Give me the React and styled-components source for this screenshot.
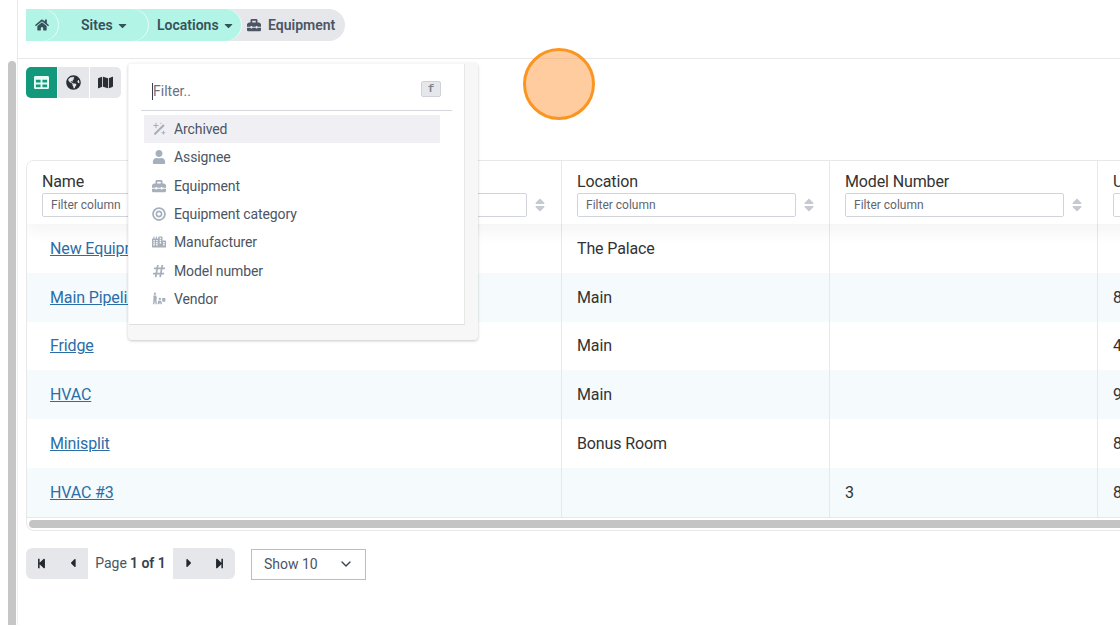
import React from "react";
import styled, { createGlobalStyle } from "styled-components";
import {
  FaHome,
  FaToolbox,
  FaCaretDown,
  FaCaretLeft,
  FaCaretRight,
  FaTable,
  FaGlobeAmericas,
  FaMap,
  FaUser,
  FaBullseye,
  FaCity,
  FaHashtag,
  FaStepBackward,
  FaStepForward,
  FaSort,
} from "react-icons/fa";
import { ChevronDown } from "lucide-react";

const GlobalStyle = createGlobalStyle`
    html, body {
        margin: 0;
        padding: 0;
        background: #ffffff;
        overflow: hidden;
    }
    * {
        box-sizing: border-box;
    }
`;

const Shell = styled.div`
    width: 1120px;
    height: 625px;
    position: relative;
    overflow: hidden;
    display: grid;
    grid-template-columns: 18px 1fr;
    grid-template-rows: 59px 1fr;
    font-family: "Roboto", "Noto Sans", sans-serif;
    color: #374151;
`;
const Corner = styled.div`
    border-right: 1px solid #e8e8e8;
`;
const TopBar = styled.div`
    padding: 9px 0 0 8px;
    border-bottom: 1px solid #e8e8e8;
`;
const Rail = styled.div`
    padding: 2px 1px 0 8px;
    border-right: 1px solid #eeeeee;
`;
const RailThumb = styled.div`
    height: 100%;
    background: #c6c6c6;
    border-radius: 4px 4px 0 0;
`;
const Content = styled.main`
    min-width: 0;
    padding: 8px 0 0 8px;
    overflow: hidden;
`;

const Crumbs = styled.nav`
    display: flex;
    height: 32px;
    font-size: 14px;
    font-weight: 600;
`;
const Crumb = styled.div`
    height: 32px;
    display: flex;
    align-items: center;
    justify-content: ${(p) => (p.$center ? "center" : "flex-start")};
    gap: ${(p) => p.$gap || 3}px;
    width: ${(p) => p.$width}px;
    margin-left: ${(p) => p.$overlap || 0}px;
    padding-left: ${(p) => p.$pad || 0}px;
    position: relative;
    z-index: ${(p) => p.$layer};
    color: ${(p) => (p.$current ? "#4b5563" : "#37525a")};
    background: ${(p) => (p.$current ? "#e5e7eb" : "#b2f5e6")};
    border-radius: 0 16px 16px 0;
    box-shadow: ${(p) => (p.$current ? "none" : "1px 0 0 #e6fbf6")};
    svg {
        flex: none;
    }
`;

const ViewToggle = styled.div`
    display: flex;
    gap: 1px;
    width: 95px;
    height: 31px;
`;
const ViewButton = styled.button`
    flex: 1;
    border: none;
    padding: 0;
    display: flex;
    align-items: center;
    justify-content: center;
    font-size: 15px;
    color: ${(p) => (p.$active ? "#e9fbf6" : "#2b2f36")};
    background: ${(p) => (p.$active ? "#12997b" : "#e5e7eb")};
    &:first-child {
        border-radius: 5px 0 0 5px;
    }
    &:last-child {
        border-radius: 0 5px 5px 0;
    }
`;

const Card = styled.section`
    width: 1200px;
    margin-top: 62px;
    border: 1px solid #e8e8e8;
    border-radius: 8px 0 0 8px;
    background: #ffffff;
    overflow: hidden;
`;
const Grid = styled.div`
    display: grid;
    grid-template-columns: 267px 268px 268px 268px 128px;
    letter-spacing: -0.13px;
`;
const HeadRow = styled(Grid)`
    height: 63px;
    position: relative;
    z-index: 1;
    background: #ffffff;
    box-shadow: 0 8px 14px rgba(0, 0, 0, 0.045);
`;
const HeadCell = styled.div`
    padding: 11px 15px 0;
    border-right: ${(p) => (p.$open ? "none" : "1px solid #e8e8e8")};
    &:last-child {
        border-right: none;
    }
`;
const HeadTitle = styled.div`
    height: 20px;
    font-size: 16px;
    line-height: 20px;
    color: #333333;
    white-space: nowrap;
`;
const FilterLine = styled.div`
    display: flex;
    align-items: center;
    gap: 7px;
    margin-top: 1px;
`;
const FilterInput = styled.input`
    width: ${(p) => (p.$narrow ? 218 : 219)}px;
    height: 24px;
    flex: none;
    padding: 0 8px;
    border: 1px solid #d1d5db;
    border-radius: 2px;
    outline: none;
    font-family: inherit;
    font-size: 12px;
    background: #ffffff;
    &::placeholder {
        color: #5f6670;
        opacity: 1;
    }
`;
const SortIcon = styled(FaSort)`
    width: 12px;
    height: 16px;
    color: #c4c9d2;
    flex: none;
`;
const BodyRow = styled(Grid)`
    height: 48.8px;
    background: ${(p) => (p.$striped ? "#f5fafd" : "#ffffff")};
`;
const Cell = styled.div`
    display: flex;
    align-items: center;
    padding-left: ${(p) => (p.$name ? 23 : 15)}px;
    border-right: ${(p) => (p.$open ? "none" : "1px solid #e8e8e8")};
    font-size: 16px;
    color: #333333;
    white-space: nowrap;
    &:last-child {
        border-right: none;
    }
`;
const NameLink = styled.a`
    color: #2a6ea8;
    text-decoration: underline;
`;
const ScrollTrack = styled.div`
    height: 13px;
    padding: 2px 0 3px 2px;
    border-top: 1px solid #e8e8e8;
`;
const ScrollThumb = styled.div`
    height: 8px;
    background: #c4c4c4;
    border-radius: 4px;
`;

const Pager = styled.div`
    display: flex;
    align-items: flex-start;
    margin-top: 17px;
`;
const PagerGroup = styled.div`
    display: flex;
    width: 62px;
    height: 31px;
    background: #e5e7eb;
    border-radius: ${(p) => (p.$end ? "0 6px 6px 0" : "6px 0 0 6px")};
`;
const PagerButton = styled.button`
    flex: 1;
    border: none;
    padding: 0;
    background: none;
    display: flex;
    align-items: center;
    justify-content: center;
    font-size: 11px;
    color: #23272e;
`;
const PageLabel = styled.div`
    width: 85px;
    height: 31px;
    display: flex;
    align-items: center;
    justify-content: center;
    gap: 3px;
    font-size: 14px;
    color: #4b5563;
    b {
        font-weight: 600;
        color: #374151;
    }
`;
const ShowSelect = styled.div`
    width: 115px;
    height: 31px;
    margin: 1px 0 0 16px;
    padding: 0 11px 0 12px;
    display: flex;
    align-items: center;
    justify-content: space-between;
    border: 1px solid #bdbdbd;
    font-size: 14px;
    color: #4b5563;
`;

const Popup = styled.div`
    position: absolute;
    left: 128px;
    top: 63px;
    width: 350px;
    height: 277px;
    padding: 1px 13px 15px 1px;
    z-index: 5;
    background: #f7f7f7;
    border-radius: 4px;
    box-shadow: 0 1px 3px rgba(0, 0, 0, 0.22);
`;
const Panel = styled.div`
    height: 100%;
    padding: 0 12px;
    background: #ffffff;
    border-right: 1px solid #e8e8e8;
    border-bottom: 1px solid #e0e0e0;
`;
const SearchRow = styled.div`
    height: 47px;
    width: 311px;
    padding: 9px 11px 0 11px;
    display: flex;
    align-items: center;
    justify-content: space-between;
    border-bottom: 1px solid #d5d7da;
`;
const SearchText = styled.div`
    padding-left: 0;
    border-left: 1px solid #374151;
    line-height: 17px;
    font-size: 14px;
    color: #6b7280;
`;
const Kbd = styled.kbd`
    width: 20px;
    height: 16px;
    margin-top: -5px;
    display: flex;
    align-items: center;
    justify-content: center;
    background: #e5e7eb;
    border: 1px solid #cfd3d9;
    border-radius: 2px;
    font-family: "Liberation Mono", monospace;
    font-size: 11px;
    font-weight: 700;
    color: #7b8290;
`;
const MenuList = styled.ul`
    list-style: none;
    margin: 4px 0 0 3px;
    padding: 0;
    width: 296px;
`;
const MenuItem = styled.li`
    height: 28.3px;
    display: flex;
    align-items: center;
    gap: 8px;
    padding-left: 8px;
    font-size: 14px;
    letter-spacing: -0.1px;
    color: #4b5563;
    background: ${(p) => (p.$active ? "#f0f0f4" : "transparent")};
    svg {
        width: 14px;
        height: 14px;
        flex: none;
        color: #a6afbc;
    }
`;

const Spotlight = styled.div`
    position: absolute;
    left: 523px;
    top: 48px;
    width: 72px;
    height: 72px;
    z-index: 6;
    border: 3px solid #fb9522;
    border-radius: 50%;
    background: rgba(255, 147, 51, 0.47);
`;

function WandIcon() {
  return (
    <svg viewBox="0 0 16 16" fill="none" stroke="currentColor" strokeLinecap="round">
      <path d="M3.5 13.5 13 4" strokeWidth="2.4" />
      <path d="M4.5 1.5v5M2 4h5" strokeWidth="1.2" />
      <path d="M13 10.5v3.5M11.2 12.2h3.6" strokeWidth="1.1" />
      <path d="M10 1.5h.5" strokeWidth="1.2" />
    </svg>
  );
}

function VendorIcon() {
  return (
    <svg viewBox="0 0 16 16" fill="currentColor">
      <circle cx="3.4" cy="2" r="1.3" />
      <path d="M1.6 4h3.2l.9 3.6H5l.6 6.4H4.1l-.7-4.6-.8 4.6H1.1l.6-6.4z" />
      <circle cx="9" cy="8" r="1.3" />
      <path d="M7 10h3.4l1.2 4H10l-.8-2-1 2H6.4z" />
      <path d="M11.4 6.8h3.8v4.4h-3.2z" />
    </svg>
  );
}

const rows = [
  { name: "New Equipment", location: "The Palace" },
  { name: "Main Pipeline", location: "Main", unit: "8" },
  { name: "Fridge", location: "Main", unit: "4" },
  { name: "HVAC", location: "Main", unit: "9" },
  { name: "Minisplit", location: "Bonus Room", unit: "8" },
  { name: "HVAC #3", model: "3", unit: "8" },
];

const columns = ["Name", "", "Location", "Model Number", "U"];

const menu = [
  { label: "Archived", Icon: WandIcon },
  { label: "Assignee", Icon: FaUser },
  { label: "Equipment", Icon: FaToolbox },
  { label: "Equipment category", Icon: FaBullseye },
  { label: "Manufacturer", Icon: FaCity },
  { label: "Model number", Icon: FaHashtag },
  { label: "Vendor", Icon: VendorIcon },
];

export default function App() {
  return (
    <Shell>
      <GlobalStyle />
      <Corner />
      <TopBar>
        <Crumbs>
          <Crumb $width={32} $layer={3} $center>
            <FaHome size={14} />
          </Crumb>
          <Crumb $width={106} $overlap={-16} $pad={39} $layer={2}>
            Sites <FaCaretDown size={13} />
          </Crumb>
          <Crumb $width={109} $overlap={-16} $pad={25} $layer={1}>
            Locations <FaCaretDown size={13} />
          </Crumb>
          <Crumb $width={120} $overlap={-16} $pad={22} $gap={7} $layer={0} $current>
            <FaToolbox size={14} /> Equipment
          </Crumb>
        </Crumbs>
      </TopBar>
      <Rail>
        <RailThumb />
      </Rail>
      <Content>
        <ViewToggle>
          <ViewButton $active>
            <FaTable />
          </ViewButton>
          <ViewButton>
            <FaGlobeAmericas />
          </ViewButton>
          <ViewButton>
            <FaMap />
          </ViewButton>
        </ViewToggle>

        <Card>
          <HeadRow>
            {columns.map((title, i) => (
              <HeadCell key={i} $open={i === 0}>
                <HeadTitle>{title}</HeadTitle>
                <FilterLine>
                  <FilterInput placeholder="Filter column" readOnly $narrow={i === 1} />
                  <SortIcon />
                </FilterLine>
              </HeadCell>
            ))}
          </HeadRow>
          {rows.map((row, i) => (
            <BodyRow key={row.name} $striped={i % 2 === 1}>
              <Cell $name $open>
                <NameLink href="#">{row.name}</NameLink>
              </Cell>
              <Cell />
              <Cell>{row.location}</Cell>
              <Cell>{row.model}</Cell>
              <Cell>{row.unit}</Cell>
            </BodyRow>
          ))}
          <ScrollTrack>
            <ScrollThumb />
          </ScrollTrack>
        </Card>

        <Pager>
          <PagerGroup>
            <PagerButton>
              <FaStepBackward />
            </PagerButton>
            <PagerButton>
              <FaCaretLeft size={14} />
            </PagerButton>
          </PagerGroup>
          <PageLabel>
            Page <b>1 of 1</b>
          </PageLabel>
          <PagerGroup $end>
            <PagerButton>
              <FaCaretRight size={14} />
            </PagerButton>
            <PagerButton>
              <FaStepForward />
            </PagerButton>
          </PagerGroup>
          <ShowSelect>
            Show 10
            <ChevronDown size={16} strokeWidth={2} color="#374151" />
          </ShowSelect>
        </Pager>
      </Content>

      <Popup>
        <Panel>
          <SearchRow>
            <SearchText>Filter..</SearchText>
            <Kbd>f</Kbd>
          </SearchRow>
          <MenuList>
            {menu.map(({ label, Icon }, i) => (
              <MenuItem key={label} $active={i === 0}>
                <Icon />
                {label}
              </MenuItem>
            ))}
          </MenuList>
        </Panel>
      </Popup>
      <Spotlight />
    </Shell>
  );
}
